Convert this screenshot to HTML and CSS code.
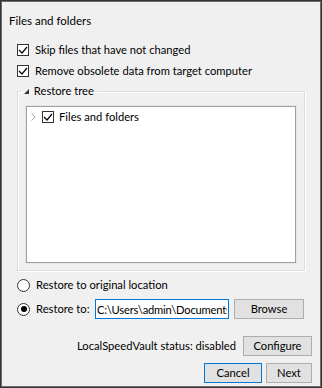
FILE: index.html
```html
<!DOCTYPE html>
<html lang="en">
<head>
    <meta charset="UTF-8">
    <title>Files and folders</title>
    <link rel="stylesheet" href="styles.css">
</head>
<body>
    <div class="dialog">
        <h1 class="page-title">Files and folders</h1>

        <label class="check-row">
            <span class="check-box"><svg width="10" height="10" viewBox="0 0 10 10"><polyline points="1,5 4,8 9,2" /></svg></span>
            <span>Skip files that have not changed</span>
        </label>
        <label class="check-row second">
            <span class="check-box"><svg width="10" height="10" viewBox="0 0 10 10"><polyline points="1,5 4,8 9,2" /></svg></span>
            <span>Remove obsolete data from target computer</span>
        </label>

        <fieldset class="group">
            <legend class="group-title">
                <svg class="collapse-mark" width="5" height="5" viewBox="0 0 5 5"><polygon points="5,0 5,5 0,5" /></svg>
                Restore tree
            </legend>
            <div class="tree">
                <div class="tree-item">
                    <svg class="expander" width="5" height="8" viewBox="0 0 5 8"><polyline points="0.5,0.5 4,4 0.5,7.5" /></svg>
                    <span class="check-box"><svg width="10" height="10" viewBox="0 0 10 10"><polyline points="1,5 4,8 9,2" /></svg></span>
                    <span>Files and folders</span>
                </div>
            </div>
        </fieldset>

        <label class="radio-row">
            <span class="radio"></span>
            <span>Restore to original location</span>
        </label>

        <div class="restore-row">
            <label class="radio-row inline">
                <span class="radio checked"></span>
                <span>Restore to:</span>
            </label>
            <input class="path-input" type="text" value="C:\Users\admin\Documents">
            <button class="btn browse-btn">Browse</button>
        </div>

        <div class="status-row">
            <span>LocalSpeedVault status: disabled</span>
            <button class="btn configure-btn">Configure</button>
        </div>

        <div class="footer">
            <button class="btn cancel-btn">Cancel</button>
            <button class="btn next-btn">Next</button>
        </div>
    </div>
</body>
</html>
```
FILE: styles.css
```css
* {
    margin: 0;
    padding: 0;
    box-sizing: border-box;
}

body {
    font-family: Lato, 'Liberation Sans', sans-serif;
    font-size: 11.2px;
    line-height: 16px;
    color: #000;
    background: #f0f0f0;
}

.dialog {
    width: 322px;
    height: 388px;
    border: 1px solid #333;
    box-shadow: inset 0 0 0 1px #6e6e6e;
    background: #f0f0f0;
    padding: 12px 9px 0 8px;
    display: flex;
    flex-direction: column;
}

.page-title {
    font-size: 11.5px;
    font-weight: normal;
    line-height: 16px;
}

.check-row {
    display: flex;
    align-items: center;
    gap: 6px;
    margin: 13px 0 0 8px;
    height: 16px;
}

.check-row.second {
    margin-top: 5px;
}

.check-box {
    width: 12px;
    height: 12px;
    border: 1px solid #333;
    background: #fff;
    display: flex;
    align-items: center;
    justify-content: center;
    flex-shrink: 0;
}

.check-box svg polyline {
    fill: none;
    stroke: #000;
    stroke-width: 1.2;
}

.group {
    margin: 4px 7px 0 8px;
    border: 1px solid #dcdcdc;
    box-shadow: inset 1px 1px 0 #fff, 1px 1px 0 #fff;
    padding: 7px 8px 7px 8px;
}

.group-title {
    margin-left: -5px;
    padding: 0 3px;
    line-height: 16px;
}

.collapse-mark {
    fill: #333;
    margin-right: 2px;
    vertical-align: 1px;
}

.tree {
    height: 157px;
    background: #fff;
    border: 1px solid #a0a0a0;
    box-shadow: 0 0 0 1px #e6e6e6;
    padding: 2px 0 0 4px;
}

.tree-item {
    display: flex;
    align-items: center;
    height: 16px;
}

.expander {
    fill: none;
    stroke: #a6a6a6;
    margin-right: 6px;
}

.tree-item .check-box {
    margin-right: 5px;
}

.radio-row {
    display: flex;
    align-items: center;
    gap: 6px;
    margin: 6px 0 0 8px;
    height: 16px;
}

.radio-row.inline {
    margin: 0;
    width: 78px;
}

.radio {
    width: 13px;
    height: 13px;
    border: 1px solid #333;
    border-radius: 50%;
    background: #fff;
    display: flex;
    align-items: center;
    justify-content: center;
    flex-shrink: 0;
}

.radio.checked::after {
    content: '';
    width: 6px;
    height: 6px;
    border-radius: 50%;
    background: #000;
}

.restore-row {
    display: flex;
    align-items: center;
    margin: 6px 0 0 8px;
    height: 20px;
}

.path-input {
    width: 134px;
    height: 20px;
    border: 1px solid #0078d7;
    outline: none;
    font: inherit;
    letter-spacing: -0.2px;
    padding: 0 1px;
    color: #000;
    background: #fff;
}

.btn {
    font: inherit;
    color: #000;
    background: #e1e1e1;
    border: 1px solid #adadad;
    height: 20px;
    padding: 0;
}

.browse-btn {
    width: 70px;
    margin-left: 5px;
}

.status-row {
    display: flex;
    align-items: center;
    justify-content: flex-end;
    gap: 7px;
    margin-top: 17px;
}

.configure-btn {
    width: 69px;
}

.footer {
    display: flex;
    justify-content: flex-end;
    gap: 4px;
    margin-top: 7px;
}

.cancel-btn {
    width: 58px;
    border-color: #0078d7;
}

.next-btn {
    width: 46px;
}
```
